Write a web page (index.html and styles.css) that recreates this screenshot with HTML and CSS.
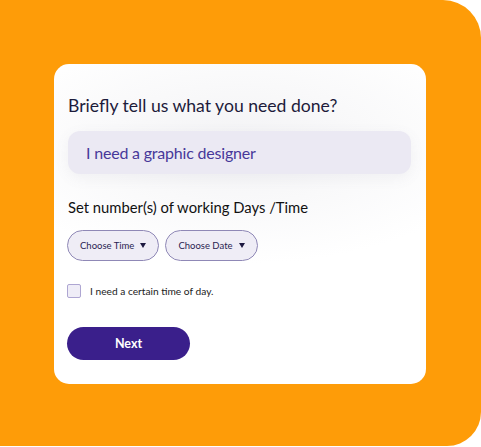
FILE: index.html
```html
<!DOCTYPE html>
<html>
<head>
<meta charset="utf-8">
<link rel="stylesheet" href="styles.css">
</head>
<body>
<div class="bg">
  <div class="card">
    <h1 class="title">Briefly tell us what you need done?</h1>
    <div class="input">I need a graphic designer</div>
    <h2 class="subtitle">Set number(s) of working Days /Time</h2>
    <div class="pills">
      <div class="pill">Choose Time <span class="caret"></span></div>
      <div class="pill">Choose Date <span class="caret"></span></div>
    </div>
    <label class="check"><span class="box"></span>I need a certain time of day.</label>
    <button class="next">Next</button>
  </div>
</div>
</body>
</html>
```
FILE: styles.css
```css
html, body { margin: 0; padding: 0; background: #fff; }
body { font-family: "Lato", "Liberation Sans", sans-serif; }
.bg {
  width: 481px;
  height: 446px;
  background: #fe9c08;
  border-radius: 0 38px 34px 0;
  box-sizing: border-box;
  padding: 64px 0 0 54px;
}
.card {
  width: 372px;
  height: 320px;
  background: #fff;
  border-radius: 15px;
  box-sizing: border-box;
  padding: 31px 15px 0 14px;
  display: flex;
  flex-direction: column;
  align-items: flex-start;
  background-image: radial-gradient(ellipse 260px 120px at 50% 25%, #f3f3f5 0%, #fff 100%);
}
.title {
  margin: 0;
  font-size: 17.6px;
  font-weight: 400;
  color: #1d1b3b;
  line-height: 22px;
}
.input {
  margin-top: 14px;
  width: 343px;
  height: 43px;
  box-sizing: border-box;
  background: #ebe9f3;
  border-radius: 12px;
  padding-left: 18px;
  display: flex;
  align-items: center;
  color: #47389a;
  font-size: 16px;
  letter-spacing: -0.2px;
  box-shadow: 0 4px 14px rgba(120, 120, 140, 0.08);
}
.subtitle {
  margin: 24px 0 0 0;
  font-size: 14.8px;
  font-weight: 400;
  color: #111;
  line-height: 18px;
}
.pills {
  display: flex;
  gap: 6px;
  margin-top: 14px;
  margin-left: -1px;
}
.pill {
  height: 31px;
  box-sizing: border-box;
  border: 1px solid #8f88b6;
  background: #efedf6;
  border-radius: 16px;
  padding: 0 12px;
  display: flex;
  align-items: center;
  gap: 6px;
  font-size: 9.5px;
  color: #2a2452;
}
.caret {
  width: 0; height: 0;
  border-left: 3.5px solid transparent;
  border-right: 3.5px solid transparent;
  border-top: 5px solid #1d1940;
}
.check {
  display: flex;
  align-items: center;
  gap: 9px;
  margin-top: 23px;
  margin-left: -1px;
  font-size: 10.2px;
  color: #222;
}
.box {
  width: 14px; height: 14px;
  box-sizing: border-box;
  border: 1px solid #aea6d2;
  background: #efedf7;
  border-radius: 2px;
}
.next {
  margin-top: 29px;
  margin-left: -1px;
  width: 123px;
  height: 33px;
  border: none;
  border-radius: 17px;
  background: #3a1f8b;
  color: #fff;
  font-family: "Lato", "Liberation Sans", sans-serif;
  font-size: 12.5px;
  font-weight: 700;
}
```
